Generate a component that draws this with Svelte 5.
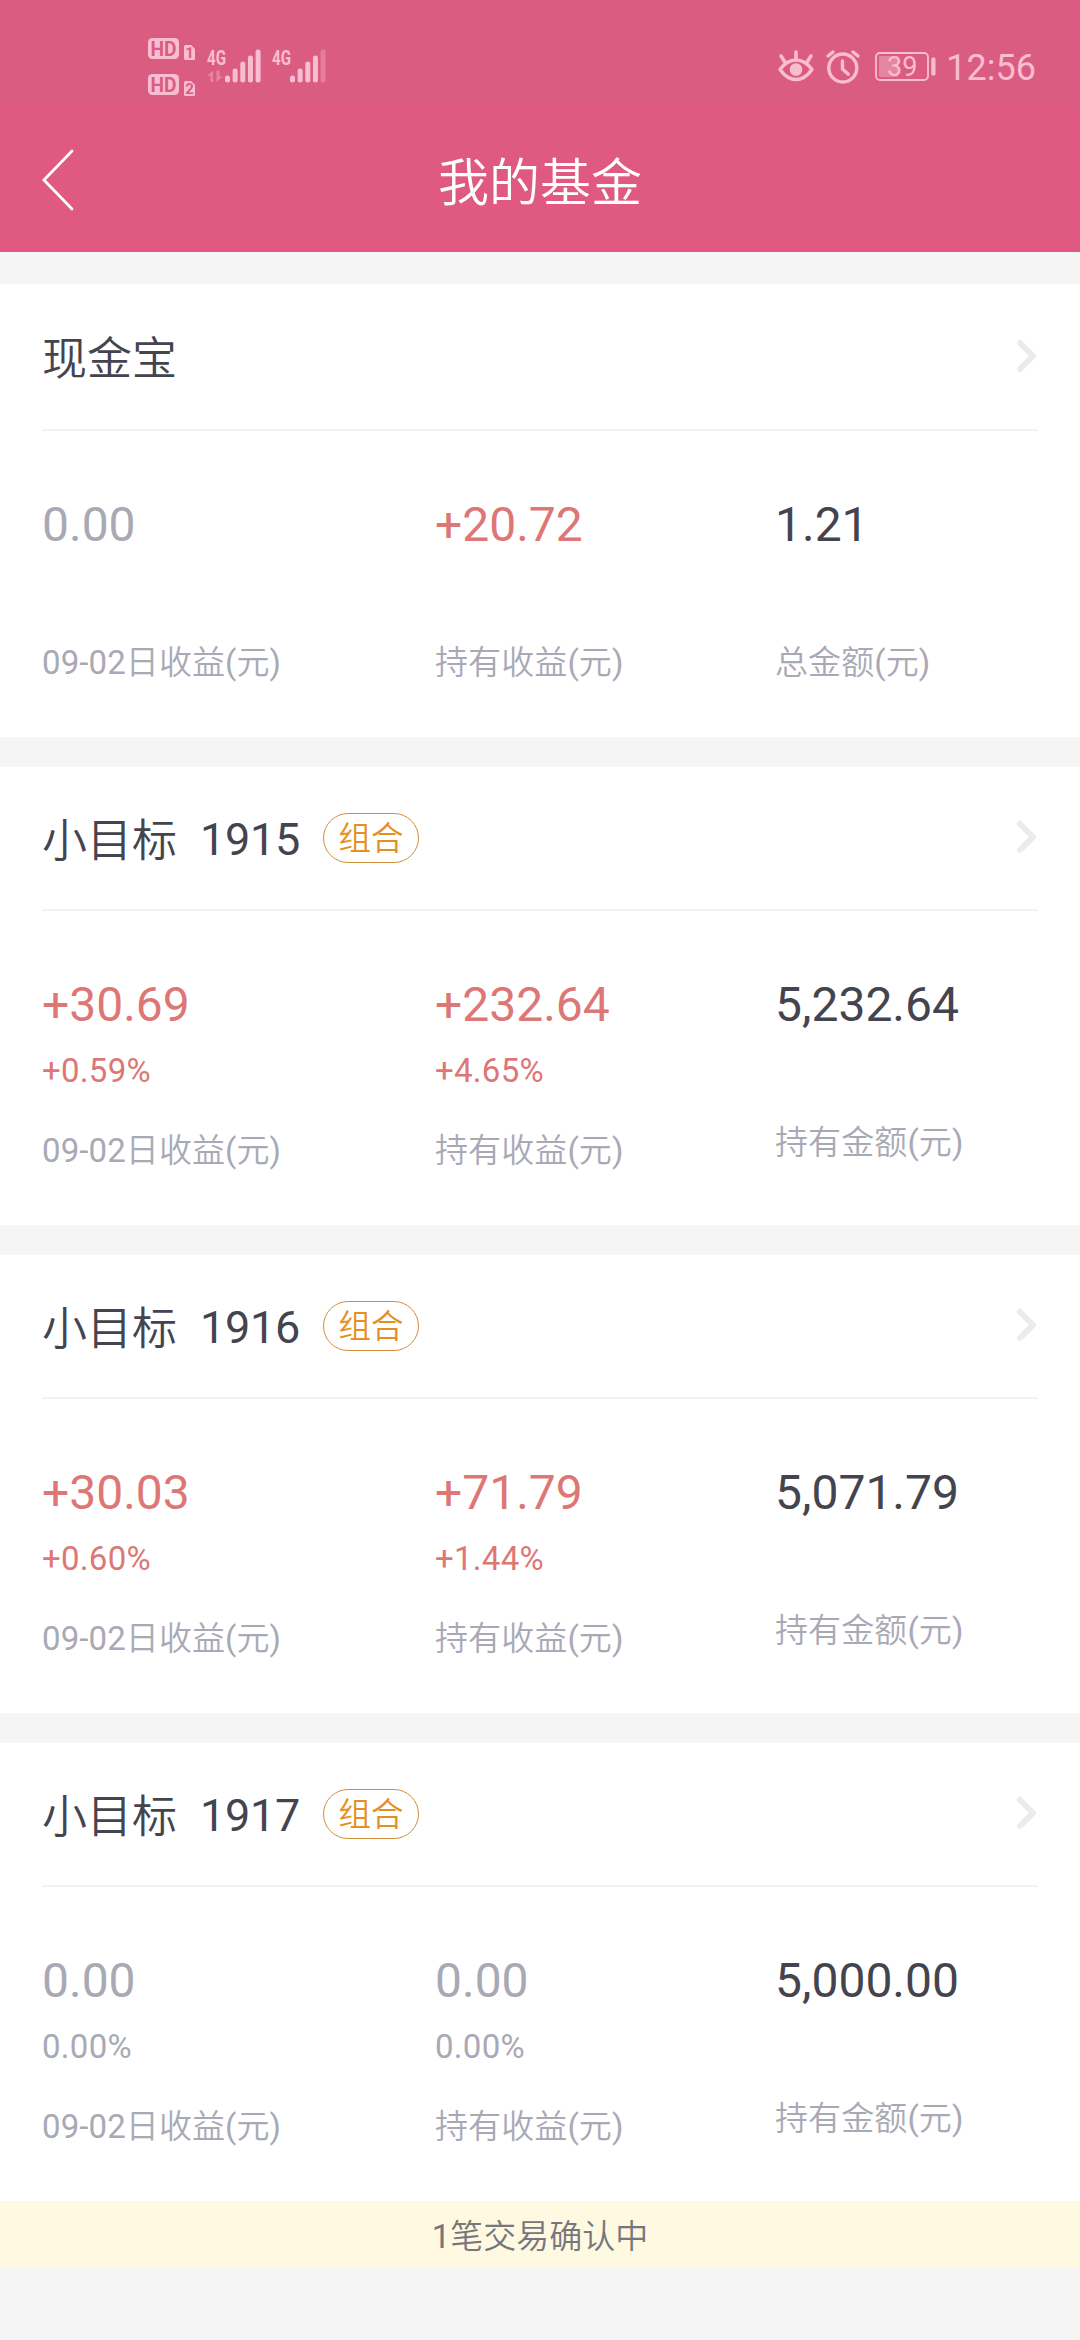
<script lang="ts">
  type Tone = 'up' | 'flat' | 'total';

  interface Figure {
    value: string;
    tone: Tone;
    label: string;
    percent?: string;
  }

  interface Fund {
    name: string;
    code?: string;
    tag?: string;
    figures: Figure[];
    notice?: string;
  }

  const funds: Fund[] = [
    {
      name: '现金宝',
      figures: [
        { value: '0.00', tone: 'flat', label: '09-02日收益(元)' },
        { value: '+20.72', tone: 'up', label: '持有收益(元)' },
        { value: '1.21', tone: 'total', label: '总金额(元)' },
      ],
    },
    {
      name: '小目标',
      code: '1915',
      tag: '组合',
      figures: [
        { value: '+30.69', percent: '+0.59%', tone: 'up', label: '09-02日收益(元)' },
        { value: '+232.64', percent: '+4.65%', tone: 'up', label: '持有收益(元)' },
        { value: '5,232.64', tone: 'total', label: '持有金额(元)' },
      ],
    },
    {
      name: '小目标',
      code: '1916',
      tag: '组合',
      figures: [
        { value: '+30.03', percent: '+0.60%', tone: 'up', label: '09-02日收益(元)' },
        { value: '+71.79', percent: '+1.44%', tone: 'up', label: '持有收益(元)' },
        { value: '5,071.79', tone: 'total', label: '持有金额(元)' },
      ],
    },
    {
      name: '小目标',
      code: '1917',
      tag: '组合',
      figures: [
        { value: '0.00', percent: '0.00%', tone: 'flat', label: '09-02日收益(元)' },
        { value: '0.00', percent: '0.00%', tone: 'flat', label: '持有收益(元)' },
        { value: '5,000.00', tone: 'total', label: '持有金额(元)' },
      ],
      notice: '1笔交易确认中',
    },
  ];

  const sims = [1, 2];
  const signals = [
    { active: 5, data: true },
    { active: 4, data: false },
  ];
  const barHeights = [7, 14, 21, 27, 33];
</script>

<div class="page">
  <div class="status-bar">
    <div class="sims">
      {#each sims as sim}
        <svg class="sim" width="48" height="23" viewBox="0 0 48 23">
          <rect x="0" y="0" width="31" height="21" rx="4.5" fill="#f9bdd2" />
          <text class="hd" x="15.5" y="17.5" textLength="26" lengthAdjust="spacingAndGlyphs">HD</text>
          <path d="M37.5 7H43L47 11V20.5Q47 22 45.5 22H37.5Q36 22 36 20.5V8.5Q36 7 37.5 7Z" fill="#f9bdd2" />
          <text class="slot" x="41.5" y="19.8">{sim}</text>
        </svg>
      {/each}
    </div>

    {#each signals as signal}
      <svg class="signal" width="56" height="36" viewBox="0 0 56 36">
        <text class="network" x="0" y="15.5" textLength="19" lengthAdjust="spacingAndGlyphs">4G</text>
        {#if signal.data}
          <path d="M6 21.5V33H3.5V27H0Z M9.5 21.5V33L16 27.5H12.5V21.5Z" fill="#f9bdd2" opacity="0.4" />
        {/if}
        {#each barHeights as height, i}
          <rect
            x={18 + i * 7.65}
            y={33.5 - height}
            width="5"
            {height}
            rx="2.3"
            fill="#f9bdd2"
            opacity={i < signal.active ? 1 : 0.35}
          />
        {/each}
      </svg>
    {/each}

    <div class="status-right">
      <svg class="eye" width="36" height="33" viewBox="0 0 36 33">
        <g fill="none" stroke="#f9bdd2" stroke-width="3.5" stroke-linecap="round">
          <path d="M2 19.5Q9 10 18 10T34 19.5Q27 29.5 18 29.5T2 19.5Z" stroke-linejoin="round" />
          <path d="M18 2V9M3 6L6.5 11.5M33 6L29.5 11.5" />
        </g>
        <circle cx="18" cy="19.5" r="6.3" fill="#f9bdd2" />
      </svg>
      <svg class="alarm" width="34" height="34" viewBox="0 0 34 34">
        <g fill="none" stroke="#f9bdd2" stroke-width="3.4" stroke-linecap="round" stroke-linejoin="round">
          <circle cx="16.8" cy="18" r="14" />
          <path d="M16.5 11V19L22.3 24.2M2 6L7 2M32 6L27 2" />
        </g>
      </svg>
      <svg class="battery" width="61" height="30" viewBox="0 0 61 30">
        <rect x="1" y="1" width="52" height="27" rx="4" fill="none" stroke="#f9bdd2" stroke-width="1.8" />
        <rect x="4" y="4" width="19" height="21" rx="1.5" fill="#f9bdd2" opacity="0.42" />
        <rect x="56.3" y="5.5" width="4.2" height="18" rx="1.6" fill="#f9bdd2" />
        <text class="level" x="27.2" y="24.2">39</text>
      </svg>
      <span class="clock">12:56</span>
    </div>
  </div>

  <header class="nav">
    <button class="back" aria-label="返回">
      <svg width="34" height="62" viewBox="0 0 34 62">
        <path d="M31 2L3 31L31 60" fill="none" stroke="#fff" stroke-width="2.8" stroke-linecap="round" />
      </svg>
    </button>
    <h1>我的基金</h1>
  </header>

  <main>
    {#each funds as fund}
      <section class="card">
        <div class="card-head" class:tagged={fund.tag}>
          <h2>{fund.name}</h2>
          {#if fund.code}
            <span class="code">{fund.code}</span>
          {/if}
          {#if fund.tag}
            <span class="tag">{fund.tag}</span>
          {/if}
          <svg class="chevron" width="20" height="32" viewBox="0 0 20 32">
            <path d="M3 3L16 16L3 29" fill="none" stroke="#ebebeb" stroke-width="6" stroke-linecap="round" stroke-linejoin="round" />
          </svg>
        </div>
        <div class="figures">
          {#each fund.figures as figure}
            <div class="figure {figure.tone}">
              <div class="value">{figure.value}</div>
              {#if figure.percent}
                <div class="percent">{figure.percent}</div>
              {/if}
              <div class="label">{figure.label}</div>
            </div>
          {/each}
        </div>
        {#if fund.notice}
          <div class="notice">{fund.notice}</div>
        {/if}
      </section>
    {/each}
  </main>
</div>

<style>
  :global(body) {
    margin: 0;
    background: #f5f5f5;
  }

  .page {
    width: 1080px;
    height: 2340px;
    overflow: hidden;
    background: #f5f5f5;
    font-family: Roboto, 'Noto Sans CJK SC DemiLight', 'Noto Sans CJK SC', sans-serif;
    color: #44444f;
  }

  .status-bar {
    box-sizing: border-box;
    height: 108px;
    padding: 38px 45px 0 148px;
    display: flex;
    align-items: flex-start;
    background: #da5d81;
  }

  .sims {
    display: flex;
    flex-direction: column;
    gap: 13px;
    margin-right: 11px;
  }

  svg {
    display: block;
    flex-shrink: 0;
    overflow: visible;
  }

  .hd {
    font-size: 20px;
    font-weight: 700;
    text-anchor: middle;
    fill: #da5d81;
  }

  .slot {
    font-size: 15px;
    font-weight: 700;
    text-anchor: middle;
    fill: #da5d81;
  }

  .signal {
    margin: 11px 9px 0 0;
  }

  .network {
    font-size: 21px;
    font-weight: 700;
    fill: #f9bdd2;
  }

  .status-right {
    margin-left: auto;
    display: flex;
    align-items: flex-start;
  }

  .eye {
    margin: 12px 12px 0 0;
  }

  .alarm {
    margin: 12px 15px 0 0;
  }

  .battery {
    margin: 14px 10px 0 0;
  }

  .level {
    font-size: 27px;
    text-anchor: middle;
    fill: #f9bdd2;
  }

  .clock {
    margin: 8px -1px 0 0;
    font-size: 36px;
    line-height: 44px;
    color: #f9bdd2;
  }

  .nav {
    height: 144px;
    display: grid;
    grid-template-columns: 120px 1fr 120px;
    align-items: center;
    background: #df5980;
  }

  .back {
    justify-self: start;
    margin-left: 41px;
    padding: 0;
    border: none;
    background: none;
  }

  h1 {
    margin: 8px 0 0;
    font-size: 51px;
    font-weight: 350;
    line-height: 60px;
    text-align: center;
    color: #fff;
  }

  main {
    padding-top: 32px;
    display: flex;
    flex-direction: column;
    gap: 30px;
  }

  .card {
    background: #fff;
  }

  .card-head {
    height: 145px;
    margin: 0 42px;
    border-bottom: 2px solid #f2f2f2;
    display: flex;
    align-items: center;
  }

  .card-head.tagged {
    height: 142px;
  }

  h2,
  .code {
    margin: 0;
    padding-top: 4px;
    font-size: 45px;
    font-weight: 400;
    line-height: 60px;
  }

  h2 {
    padding-top: 7px;
    font-weight: 350;
  }

  .code {
    margin-left: 23px;
    letter-spacing: -0.3px;
  }

  .tag {
    box-sizing: border-box;
    width: 96px;
    height: 50px;
    margin-left: 23px;
    border: 1px solid #d08f3c;
    border-radius: 25px;
    font-size: 32.5px;
    font-weight: 350;
    line-height: 51px;
    text-align: center;
    color: #e48f24;
  }

  .chevron {
    margin: 0 1px 2px auto;
  }

  .figures {
    padding: 66px 42px 52px;
    display: grid;
    grid-template-columns: 393px 340px 1fr;
  }

  .value {
    font-size: 48px;
    line-height: 56px;
  }

  .percent {
    margin-top: 16px;
    font-size: 33px;
    line-height: 44px;
    letter-spacing: 0.3px;
  }

  .label {
    margin-top: 88px;
    font-size: 33px;
    line-height: 44px;
    letter-spacing: 0.1px;
    color: #a9a9b5;
  }

  .percent + .label {
    margin-top: 36px;
  }

  .up {
    color: #dd7775;
  }

  .flat {
    color: #a9a9b5;
  }

  .total {
    color: #44444f;
  }

  .notice {
    height: 66px;
    font-size: 33px;
    line-height: 71px;
    text-align: center;
    color: #77777b;
    background: #fff9e1;
  }
</style>
